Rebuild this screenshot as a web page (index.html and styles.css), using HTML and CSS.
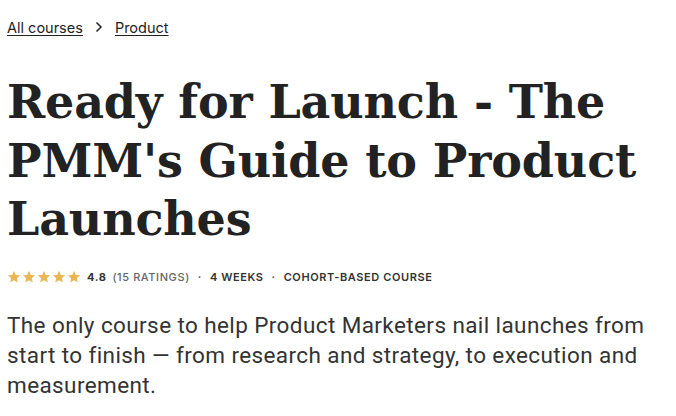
FILE: index.html
```html
<!DOCTYPE html>
<html lang="en">
<head>
<meta charset="utf-8">
<title>Ready for Launch</title>
<link rel="stylesheet" href="styles.css">
</head>
<body>
<main class="page">
  <nav class="crumbs">
    <a class="crumb" href="#">All courses</a>
    <svg class="chev" width="8" height="12" viewBox="0 0 8 12"><path d="M1.5 1.5 L6 6 L1.5 10.5" fill="none" stroke="#222" stroke-width="1.5"/></svg>
    <a class="crumb" href="#">Product</a>
  </nav>
  <h1 class="title">Ready for Launch - The PMM's Guide to Product Launches</h1>
  <div class="meta">
    <span class="stars">
      <svg viewBox="0 0 24 24"><path d="M12 1.5l3.1 6.9 7.4.7-5.6 5 1.7 7.4L12 17.6l-6.6 3.9 1.7-7.4-5.6-5 7.4-.7z"/></svg>
      <svg viewBox="0 0 24 24"><path d="M12 1.5l3.1 6.9 7.4.7-5.6 5 1.7 7.4L12 17.6l-6.6 3.9 1.7-7.4-5.6-5 7.4-.7z"/></svg>
      <svg viewBox="0 0 24 24"><path d="M12 1.5l3.1 6.9 7.4.7-5.6 5 1.7 7.4L12 17.6l-6.6 3.9 1.7-7.4-5.6-5 7.4-.7z"/></svg>
      <svg viewBox="0 0 24 24"><path d="M12 1.5l3.1 6.9 7.4.7-5.6 5 1.7 7.4L12 17.6l-6.6 3.9 1.7-7.4-5.6-5 7.4-.7z"/></svg>
      <svg viewBox="0 0 24 24"><path d="M12 1.5l3.1 6.9 7.4.7-5.6 5 1.7 7.4L12 17.6l-6.6 3.9 1.7-7.4-5.6-5 7.4-.7z"/></svg>
    </span>
    <span class="rating">4.8</span>
    <span class="count">(15 RATINGS)</span>
    <span class="dot">·</span>
    <span class="item">4 WEEKS</span>
    <span class="dot">·</span>
    <span class="item">COHORT-BASED COURSE</span>
  </div>
  <p class="lead">The only course to help Product Marketers nail launches from start to finish — from research and strategy, to execution and measurement.</p>
</main>
</body>
</html>
```
FILE: styles.css
```css
* { box-sizing: border-box; }
html, body { margin: 0; background: #fff; }
.page {
  padding: 17px 7px 0 7px;
  font-family: "Inter", "Liberation Sans", sans-serif;
  color: #222;
}
.crumbs {
  display: flex;
  align-items: center;
  gap: 12px;
  height: 20px;
  font-size: 14.5px;
}
.crumb {
  color: #222;
  text-decoration: underline;
  text-underline-offset: 2px;
}
.chev { display: block; }
.title {
  margin: 36px 0 0 0;
  font-family: "DejaVu Serif", serif;
  font-weight: 700;
  font-size: 46px;
  line-height: 58.5px;
  color: #222;
  letter-spacing: -0.15px;
  max-width: 660px;
}
.meta {
  margin-top: 21px;
  display: flex;
  align-items: center;
  gap: 6px;
  font-size: 11px;
  letter-spacing: 0.6px;
  color: #333;
  font-weight: 600;
}
.stars { display: flex; gap: 1px; }
.stars svg { width: 14px; height: 14px; fill: #eab656; display: block; }
.rating { font-weight: 700; color: #333; }
.count { color: #666; font-weight: 500; }
.dot { color: #555; padding: 0 2px; }
.lead {
  margin: 26px 0 0 0;
  font-family: "Roboto", "Liberation Sans", sans-serif;
  font-size: 22.5px;
  line-height: 30px;
  letter-spacing: 0.4px;
  color: #333;
  max-width: 668px;
}
```
